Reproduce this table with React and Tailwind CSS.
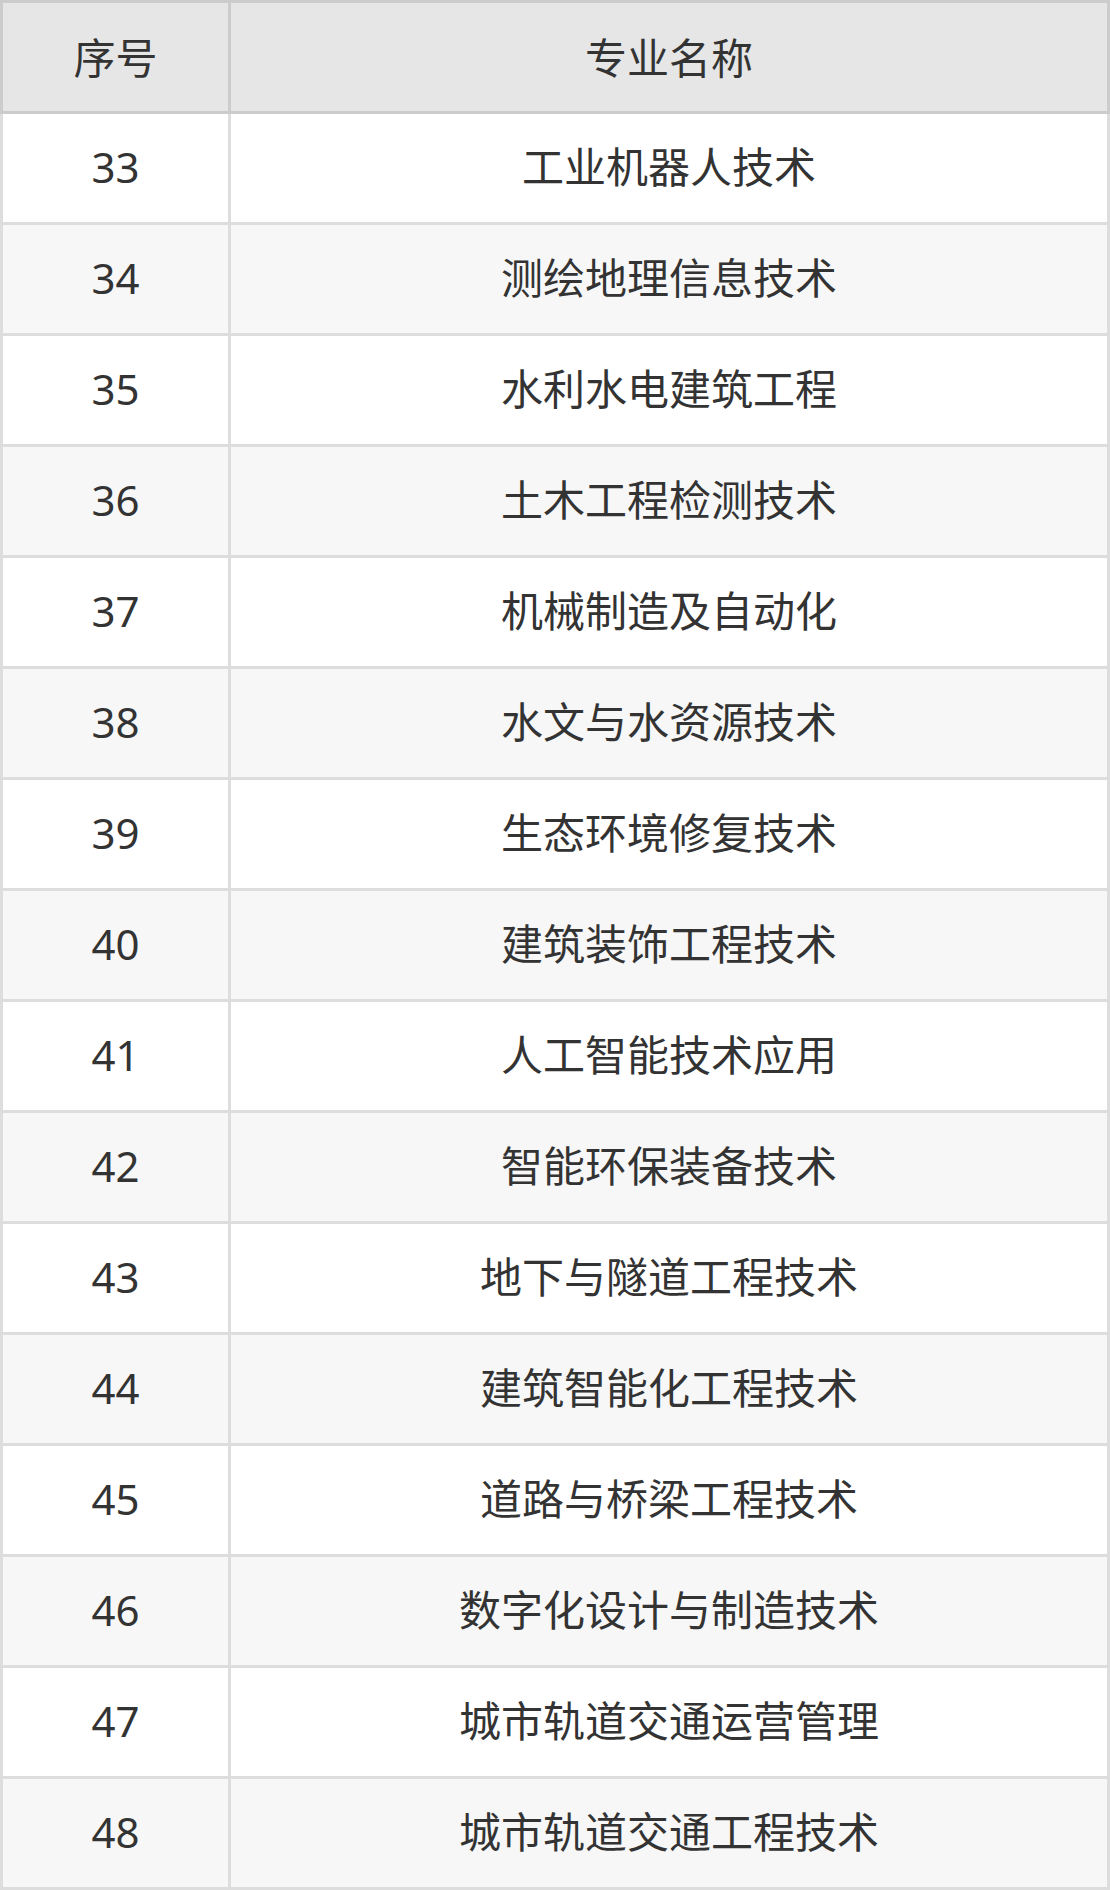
const rows = [
  [33, "工业机器人技术"],
  [34, "测绘地理信息技术"],
  [35, "水利水电建筑工程"],
  [36, "土木工程检测技术"],
  [37, "机械制造及自动化"],
  [38, "水文与水资源技术"],
  [39, "生态环境修复技术"],
  [40, "建筑装饰工程技术"],
  [41, "人工智能技术应用"],
  [42, "智能环保装备技术"],
  [43, "地下与隧道工程技术"],
  [44, "建筑智能化工程技术"],
  [45, "道路与桥梁工程技术"],
  [46, "数字化设计与制造技术"],
  [47, "城市轨道交通运营管理"],
  [48, "城市轨道交通工程技术"],
];

const font = { fontFamily: '"Noto Sans", "Noto Sans CJK SC", sans-serif' };

export default function App() {
  return (
    <div className="w-[1110px] bg-white text-[#333333] text-[42px]" style={font}>
      {/* Header */}
      <div className="flex border-[3px] border-[#cccccc] bg-[#e6e6e6]">
        <div className="w-[228px] h-[108px] flex items-center justify-center border-r-[3px] border-[#cccccc]">
          序号
        </div>
        <div className="flex-1 h-[108px] flex items-center justify-center">
          专业名称
        </div>
      </div>

      {/* Body */}
      {rows.map(([no, name], i) => (
        <div
          key={no}
          className={
            "flex border-x-[3px] border-b-[3px] border-[#dddddd] " +
            (i % 2 === 0 ? "bg-white" : "bg-[#f7f7f7]")
          }
        >
          <div className="w-[228px] h-[108px] pb-[3px] flex items-center justify-center border-r-[3px] border-[#dddddd]">
            {no}
          </div>
          <div className="flex-1 h-[108px] pb-[3px] flex items-center justify-center">
            {name}
          </div>
        </div>
      ))}
    </div>
  );
}
